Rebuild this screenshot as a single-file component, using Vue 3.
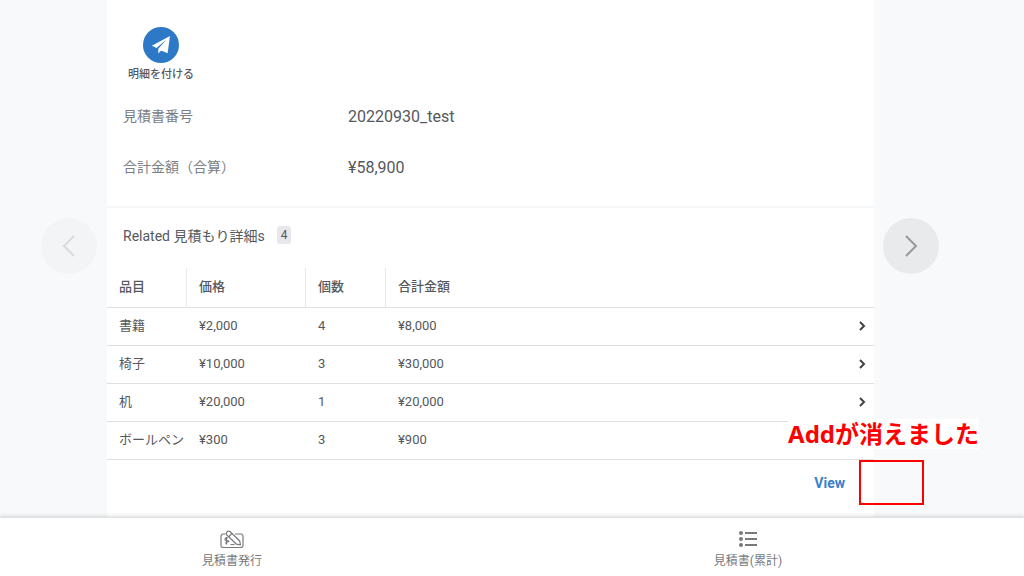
<script setup>
const fields = [
  { label: '見積書番号', value: '20220930_test' },
  { label: '合計金額（合算）', value: '¥58,900' },
]
const columns = ['品目', '価格', '個数', '合計金額']
const rows = [
  { item: '書籍', price: '¥2,000', count: 4, total: '¥8,000' },
  { item: '椅子', price: '¥10,000', count: 3, total: '¥30,000' },
  { item: '机', price: '¥20,000', count: 1, total: '¥20,000' },
  { item: 'ボールペン', price: '¥300', count: 3, total: '¥900' },
]
</script>

<template>
  <div class="app">
    <main class="stage">
      <div class="side side-left">
        <button class="pager" type="button" aria-label="Previous" disabled>
          <svg width="24" height="24" viewBox="0 0 24 24"><path d="M17 2 7 12l10 10" /></svg>
        </button>
      </div>

      <section class="card">
        <div class="details">
          <button class="action" type="button">
            <span class="action-disc">
              <svg width="20" height="20" viewBox="0 0 20 20">
                <path d="M19 1 .800 10.700l4.700 2.200L15.500 4.500 7.300 13.800v4.600l2.600-2.600 2 .500 4.700 2z" />
              </svg>
            </span>
            <span>明細を付ける</span>
          </button>
          <dl class="fields">
            <div v-for="f in fields" :key="f.label" class="field">
              <dt>{{ f.label }}</dt>
              <dd>{{ f.value }}</dd>
            </div>
          </dl>
        </div>

        <div class="related">
          <h2>Related 見積もり詳細s <span class="badge">4</span></h2>
          <table>
            <colgroup>
              <col class="c-item" /><col class="c-price" /><col class="c-count" /><col /><col class="c-go" />
            </colgroup>
            <thead>
              <tr>
                <th v-for="c in columns" :key="c" scope="col">{{ c }}</th>
                <td></td>
              </tr>
            </thead>
            <tbody>
              <tr v-for="r in rows" :key="r.item">
                <td>{{ r.item }}</td>
                <td>{{ r.price }}</td>
                <td>{{ r.count }}</td>
                <td>{{ r.total }}</td>
                <td class="go">
                  <svg width="8" height="10" viewBox="0 0 8 10"><path d="m2 1 4 4-4 4" /></svg>
                </td>
              </tr>
            </tbody>
          </table>
          <div class="card-foot">
            <a href="#view">View</a>
            <span class="note">Addが消えました</span>
            <span class="note-frame"></span>
          </div>
        </div>
      </section>

      <div class="side side-right">
        <button class="pager" type="button" aria-label="Next">
          <svg width="24" height="24" viewBox="0 0 24 24"><path d="m7 2 10 10L7 22" /></svg>
        </button>
      </div>
    </main>

    <nav class="tabs">
      <a href="#issue" class="tab tab-first">
        <svg class="line-icon" width="24" height="20" viewBox="0 0 24 20">
          <path d="M5.500 5H2Q2 6.500 1 6.500V17q1 0 1 1.500h20q0-1.500 1-1.500V6.500Q22 6.500 22 5H15" />
          <path d="M8 9Q5 8.500 5 10.200t3 1.600-3 2.200M6.500 8v7.500M10.500 15.500h4" />
          <path class="pencil" d="M6.800 6 16.500 15.200l4 .800-.800-4L10 2.500A2.400 2.400 0 0 0 6.800 6zM8.800 7.800l3-3.300" />
        </svg>
        <span>見積書発行</span>
      </a>
      <a href="#total" class="tab">
        <svg class="list-icon" width="20" height="20" viewBox="0 0 20 20">
          <g><circle cx="3" cy="4" r="2" /><circle cx="3" cy="10" r="2" /><circle cx="3" cy="16" r="2" /></g>
          <path d="M7 4h12M7 10h12M7 16h12" />
        </svg>
        <span>見積書(累計)</span>
      </a>
    </nav>
  </div>
</template>

<style>
body {
  margin: 0;
  background: #f8f9fb;
}
</style>

<style scoped>
.app {
  display: flex;
  flex-direction: column;
  height: 100vh;
  overflow: hidden;
  font-family: Roboto, "Noto Sans CJK JP", sans-serif;
  color: #55585c;
}
button {
  border: 0;
  padding: 0;
  font: inherit;
  color: inherit;
  background: none;
}
a {
  text-decoration: none;
}
svg {
  display: block;
  fill: none;
  stroke: currentColor;
}
.stage {
  flex: 1;
  min-height: 0;
  display: grid;
  grid-template-columns: 107fr 767fr 150fr;
}
.side {
  display: flex;
  align-items: center;
  padding-bottom: 25px;
}
.side-left {
  justify-content: flex-end;
  padding-right: 10px;
}
.side-right {
  padding-left: 9px;
}
.pager {
  display: grid;
  place-items: center;
  width: 56px;
  height: 56px;
  border-radius: 50%;
  background: #e9eaeb;
  color: #98999b;
}
.pager:disabled {
  background: #f3f4f5;
  color: #d9dadb;
}
.pager svg {
  stroke-width: 2;
}
.card {
  background: #fff;
  min-width: 0;
}
.details {
  padding: 27px 16px 13px;
  border-bottom: 2px solid #f5f6f8;
}
.action {
  display: flex;
  flex-direction: column;
  align-items: center;
  gap: 3px;
  margin-left: 5px;
  font-size: 11px;
  line-height: 18px;
  font-weight: 500;
  color: #55585c;
}
.action-disc {
  display: grid;
  place-items: center;
  width: 36px;
  height: 36px;
  border-radius: 50%;
  background: #2e79c7;
}
.action-disc svg {
  fill: #fff;
  stroke: none;
}
.fields {
  margin: 7px 0 0;
}
.field {
  display: grid;
  grid-template-columns: 225px 1fr;
  align-items: center;
  height: 51px;
}
dt {
  padding-bottom: 4px;
  font-size: 14px;
  color: #7b7e82;
}
dd {
  margin: 0;
  font-size: 16px;
}
h2 {
  display: flex;
  align-items: center;
  gap: 12px;
  box-sizing: border-box;
  height: 60px;
  margin: 0;
  padding: 0 0 6px 16px;
  font-size: 14px;
  font-weight: 400;
}
.badge {
  padding: 0 4px;
  border-radius: 3px;
  background: #e7e8eb;
  font-size: 12px;
  line-height: 18px;
}
table {
  width: 100%;
  table-layout: fixed;
  border-collapse: separate;
  border-spacing: 0;
  font-size: 13px;
}
.c-item {
  width: 80px;
}
.c-price {
  width: 119px;
}
.c-count {
  width: 80px;
}
.c-go {
  width: 24px;
}
th,
td {
  box-sizing: border-box;
  height: 38px;
  padding: 0 0 2px 12px;
  border-bottom: 1px solid #dedfe1;
  text-align: left;
  white-space: nowrap;
  line-height: 20px;
}
th {
  height: 40px;
  font-weight: 500;
}
th:not(:nth-child(4)) {
  border-right: 1px solid #e8e9eb;
}
.go {
  padding: 0 0 2px;
  color: #404347;
}
.go svg {
  margin-left: 8px;
  stroke-width: 2;
}
.card-foot {
  position: relative;
  display: flex;
  justify-content: flex-end;
  padding: 13px 29px 14px 0;
  font-size: 14px;
  line-height: 20px;
}
.card-foot a {
  font-weight: 700;
  color: #3a80c9;
}
.note {
  position: absolute;
  right: -105px;
  bottom: 58px;
  background: #fff;
  color: #f00;
  font: 700 24px/30px "Noto Sans", "Noto Sans CJK JP", sans-serif;
  white-space: nowrap;
}
.note-frame {
  position: absolute;
  box-sizing: border-box;
  right: -50px;
  top: 0;
  width: 65px;
  height: 45px;
  border: 2px solid #f00;
}
.tabs {
  position: relative;
  display: grid;
  grid-template-columns: 1fr 1fr;
  height: 58px;
  background: #fff;
  border-top: 1px solid #e0e2e2;
  box-shadow: 0 -1px 4px rgba(0, 0, 0, 0.14);
}
.tab {
  display: flex;
  flex-direction: column;
  align-items: center;
  gap: 2px;
  padding: 11px 40px 0 0;
  font-size: 12px;
  line-height: 20px;
  color: #77797c;
}
.tab-first {
  padding-right: 48px;
}
.line-icon {
  stroke-width: 1.2;
  stroke-linejoin: round;
}
.pencil {
  fill: #fff;
}
.list-icon {
  stroke-width: 2;
}
.list-icon g {
  fill: currentColor;
  stroke: none;
}
</style>
